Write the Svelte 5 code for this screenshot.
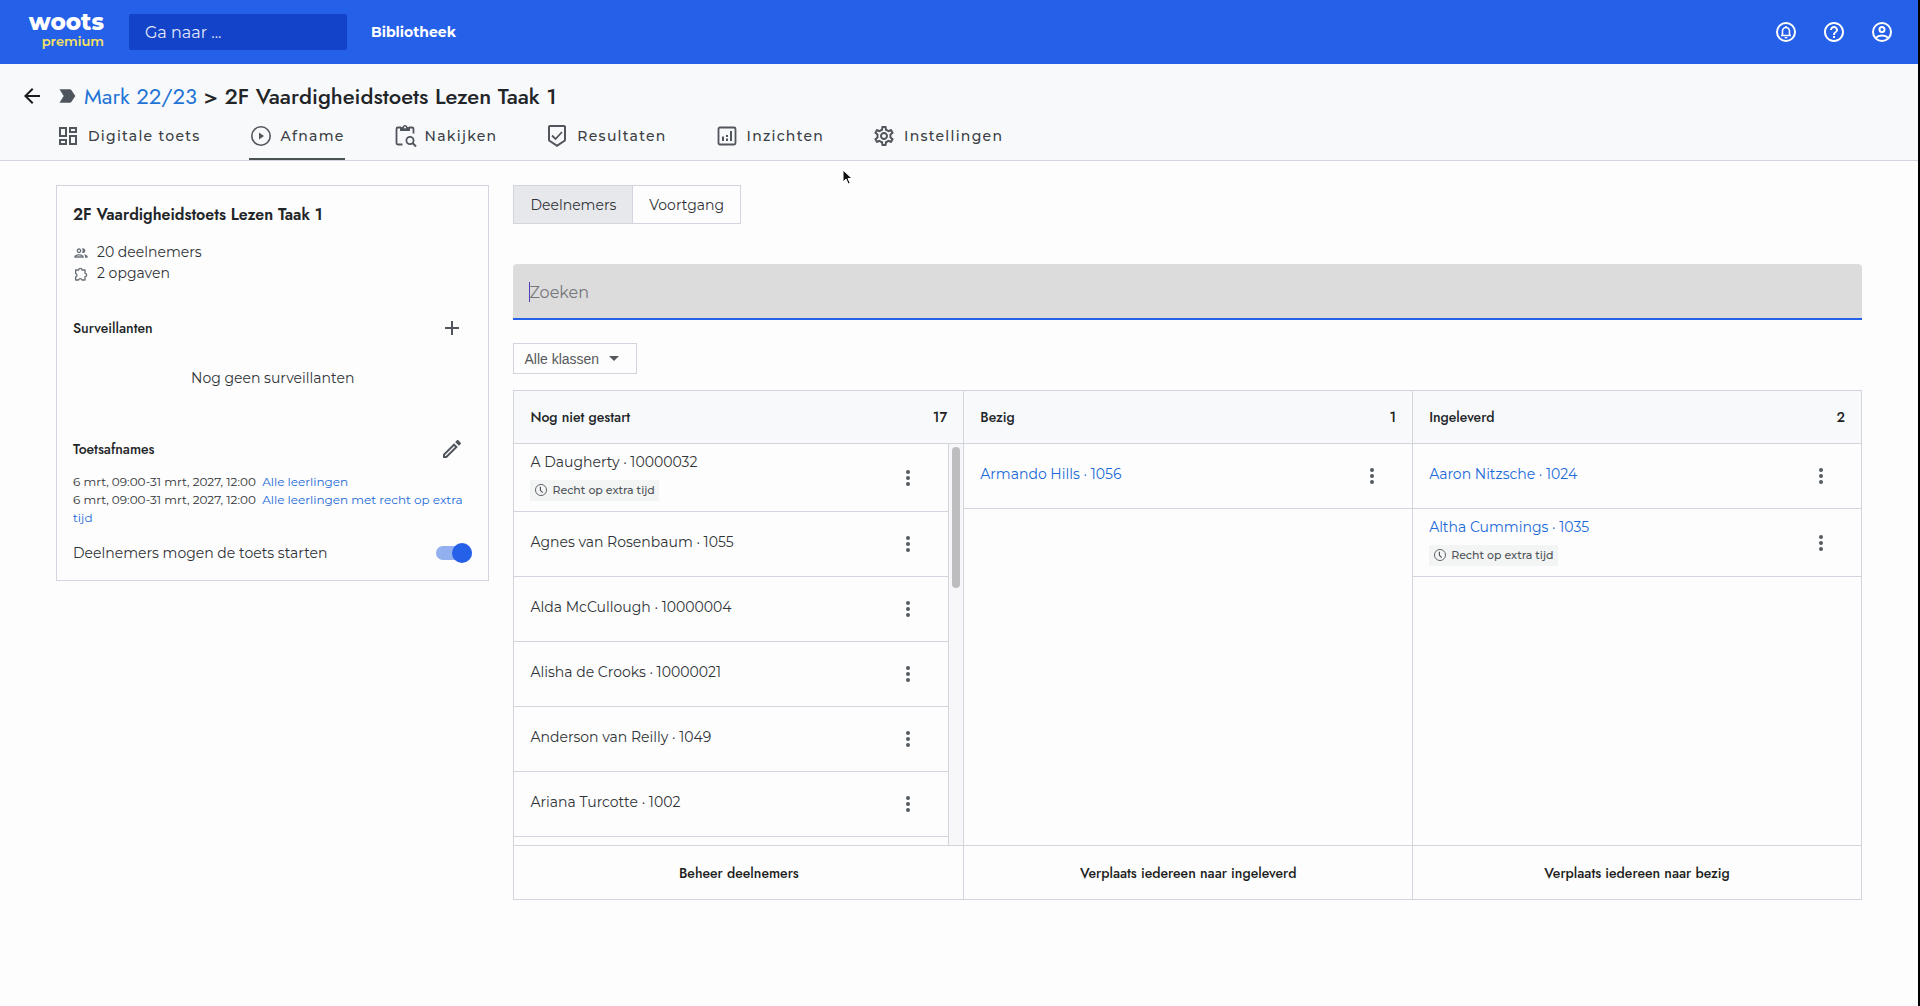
<script lang="ts">
  type Person = { name: string; extra?: boolean };
  type Column = {
    title: string;
    action: string;
    count: number;
    linked: boolean;
    scrolls: boolean;
    people: Person[];
  };

  const tabs = [
    { label: "Digitale toets", icon: "dashboard" },
    { label: "Afname", icon: "play" },
    { label: "Nakijken", icon: "review" },
    { label: "Resultaten", icon: "shield" },
    { label: "Inzichten", icon: "chart" },
    { label: "Instellingen", icon: "gear" },
  ];

  const sessions = ["Alle leerlingen", "Alle leerlingen met recht op extra tijd"];

  const columns: Column[] = [
    {
      title: "Nog niet gestart",
      action: "Beheer deelnemers",
      count: 17,
      linked: false,
      scrolls: true,
      people: [
        { name: "A Daugherty · 10000032", extra: true },
        { name: "Agnes van Rosenbaum · 1055" },
        { name: "Alda McCullough · 10000004" },
        { name: "Alisha de Crooks · 10000021" },
        { name: "Anderson van Reilly · 1049" },
        { name: "Ariana Turcotte · 1002" },
      ],
    },
    {
      title: "Bezig",
      action: "Verplaats iedereen naar ingeleverd",
      count: 1,
      linked: true,
      scrolls: false,
      people: [{ name: "Armando Hills · 1056" }],
    },
    {
      title: "Ingeleverd",
      action: "Verplaats iedereen naar bezig",
      count: 2,
      linked: true,
      scrolls: false,
      people: [
        { name: "Aaron Nitzsche · 1024" },
        { name: "Altha Cummings · 1035", extra: true },
      ],
    },
  ];

  let activeTab = $state("Afname");
  let view = $state("Deelnemers");
  let search = $state("");
  let canStart = $state(true);
</script>

{#snippet icon(name: string, size: number = 24)}
  <svg class="icon" width={size} height={size} viewBox="0 0 24 24" fill="currentColor" aria-hidden="true">
    {#if name === "dashboard"}
      <path d="M19 5v2h-4V5h4M9 5v6H5V5h4m10 8v6h-4v-6h4M9 17v2H5v-2h4M21 3h-8v6h8V3zM11 3H3v10h8V3zm10 8h-8v10h8V11zm-10 4H3v6h8v-6z" />
    {:else if name === "play"}
      <circle cx="12" cy="12" r="9.2" fill="none" stroke="currentColor" stroke-width="1.6" />
      <path d="M10 8.500v7l5-3.500z" />
    {:else if name === "review"}
      <path d="M9.500 20.500H5A1.500 1.500 0 0 1 3.500 19V5A1.500 1.500 0 0 1 5 3.500h3M16 3.500h3A1.500 1.500 0 0 1 20.500 5v4.500" fill="none" stroke="currentColor" stroke-width="1.800" />
      <path d="M7 3h2.500a2.600 2.600 0 0 1 5 0H17v4H7zM12 2.500a1 1 0 1 0 0 2 1 1 0 0 0 0-2z" fill-rule="evenodd" />
      <circle cx="17" cy="16.500" r="3.600" fill="none" stroke="currentColor" stroke-width="1.800" />
      <path d="M19.500 19l3.500 3.500" stroke="currentColor" stroke-width="2" />
    {:else if name === "shield"}
      <path d="M19 1H5c-1.100 0-1.990.9-1.990 2L3 15.930c0 .69.35 1.300.88 1.660L12 23l8.110-5.410c.53-.36.88-.97.88-1.660L21 3c0-1.100-.9-2-2-2zm-7 19.600l-7-4.660V3h14v12.930l-7 4.670z" />
      <path d="M7 11.500l3.500 3.500 6.500-7" fill="none" stroke="currentColor" stroke-width="1.800" />
    {:else if name === "chart"}
      <rect x="3.500" y="3.500" width="17" height="17" rx="1.500" fill="none" stroke="currentColor" stroke-width="1.800" />
      <path d="M7 12.500h2V17H7zM11 14.500h2V17h-2zM11 11h2v2h-2zM15 7h2v10h-2z" />
    {:else if name === "gear"}
      <path d="M19.430 12.980c.04-.32.07-.64.07-.98 0-.34-.03-.66-.07-.98l2.110-1.650c.19-.15.24-.42.12-.64l-2-3.460c-.09-.16-.26-.25-.44-.25-.06 0-.12.01-.17.03l-2.490 1c-.52-.4-1.080-.73-1.690-.98l-.38-2.650C14.460 2.180 14.250 2 14 2h-4c-.25 0-.46.18-.49.42l-.38 2.650c-.61.25-1.170.59-1.690.98l-2.490-1c-.06-.02-.12-.03-.18-.03-.17 0-.34.09-.43.25l-2 3.460c-.13.22-.07.49.12.64l2.110 1.650c-.04.32-.07.65-.07.98 0 .33.03.66.07.98l-2.110 1.650c-.19.15-.24.42-.12.64l2 3.460c.09.16.26.25.44.25.06 0 .12-.01.17-.03l2.490-1c.52.4 1.080.73 1.690.98l.38 2.650c.03.24.24.42.49.42h4c.25 0 .46-.18.49-.42l.38-2.650c.61-.25 1.170-.59 1.690-.98l2.490 1c.06.02.12.03.18.03.17 0 .34-.09.43-.25l2-3.460c.12-.22.07-.49-.12-.64l-2.110-1.650zm-1.980-1.710c.04.31.05.52.05.73 0 .21-.02.43-.05.73l-.14 1.130.89.7 1.080.84-.7 1.210-1.270-.51-1.040-.42-.9.68c-.43.32-.84.56-1.250.73l-1.060.43-.16 1.130-.2 1.350h-1.400l-.19-1.350-.16-1.130-1.060-.43c-.43-.18-.83-.41-1.230-.71l-.91-.7-1.060.43-1.270.51-.7-1.210 1.080-.84.89-.7-.14-1.130c-.03-.31-.05-.54-.05-.74s.02-.43.05-.73l.14-1.130-.89-.7-1.080-.84.7-1.210 1.270.51 1.040.42.9-.68c.43-.32.84-.56 1.250-.73l1.060-.43.16-1.130.2-1.350h1.390l.19 1.350.16 1.130 1.060.43c.43.18.83.41 1.230.71l.91.7 1.060-.43 1.270-.51.7 1.210-1.070.85-.89.7.14 1.130zM12 8c-2.210 0-4 1.790-4 4s1.790 4 4 4 4-1.790 4-4-1.790-4-4-4zm0 6c-1.100 0-2-.9-2-2s.9-2 2-2 2 .9 2 2-.9 2-2 2z" />
    {:else if name === "bell"}
      <circle cx="12" cy="12" r="9" fill="none" stroke="currentColor" stroke-width="2" />
      <path d="M8.500 15.500v-4.500a3.500 3.500 0 0 1 7 0v4.500M7 15.500h10M12 6v2" fill="none" stroke="currentColor" stroke-width="1.600" />
      <path d="M10.500 17h3a1.500 1.500 0 0 1-3 0z" />
    {:else if name === "help"}
      <path d="M11 18h2v-2h-2v2zm1-16C6.480 2 2 6.480 2 12s4.480 10 10 10 10-4.480 10-10S17.520 2 12 2zm0 18c-4.410 0-8-3.590-8-8s3.590-8 8-8 8 3.590 8 8-3.590 8-8 8zm0-14c-2.210 0-4 1.790-4 4h2c0-1.100.9-2 2-2s2 .9 2 2c0 2-3 1.750-3 5h2c0-2.250 3-2.500 3-5 0-2.210-1.790-4-4-4z" />
    {:else if name === "account"}
      <circle cx="12" cy="12" r="9" fill="none" stroke="currentColor" stroke-width="2" />
      <circle cx="12" cy="9.500" r="2.500" fill="none" stroke="currentColor" stroke-width="2" />
      <path d="M5.500 18c3.500-3.300 9.500-3.300 13 0" fill="none" stroke="currentColor" stroke-width="2" />
    {:else if name === "back"}
      <path d="M20 11H7.830l5.590-5.590L12 4l-8 8 8 8 1.410-1.410L7.830 13H20v-2z" />
    {:else if name === "label"}
      <path d="M3 4h12.500c.7 0 1.300.3 1.700.9L22 12l-4.800 7.100c-.4.6-1 .9-1.700.9H3l5-8z" />
    {:else if name === "people"}
      <path d="M9 13.750c-2.340 0-7 1.170-7 3.500V19h14v-1.750c0-2.330-4.660-3.500-7-3.500zM4.340 17c.84-.58 2.870-1.250 4.660-1.250s3.820.67 4.660 1.250H4.340zM9 12c1.930 0 3.500-1.570 3.500-3.500S10.930 5 9 5 5.500 6.570 5.500 8.500 7.070 12 9 12zm0-5c.83 0 1.500.67 1.500 1.500S9.830 10 9 10s-1.500-.67-1.500-1.500S8.170 7 9 7zm7.040 6.810c1.160.84 1.960 1.960 1.960 3.440V19h4v-1.750c0-2.020-3.500-3.170-5.960-3.440zM15 12c1.930 0 3.500-1.570 3.500-3.500S16.930 5 15 5c-.54 0-1.040.13-1.500.35.63.89 1 1.980 1 3.150s-.37 2.260-1 3.150c.46.22.96.35 1.500.35z" />
    {:else if name === "puzzle"}
      <path d="M4 6h4.500a2.500 2.500 0 1 1 5 0H18v5a2.500 2.500 0 1 1 0 5v5h-4.500a2.700 2.700 0 0 0-5.200 0H4v-4.500a2.700 2.700 0 0 0 0-5.200z" fill="none" stroke="currentColor" stroke-width="2" stroke-linejoin="round" />
    {:else if name === "plus"}
      <path d="M19 13h-6v6h-2v-6H5v-2h6V5h2v6h6v2z" />
    {:else if name === "pencil"}
      <path d="M14.060 9.020l.92.92L5.920 19H5v-.92l9.060-9.060M17.660 3c-.25 0-.51.1-.7.29l-1.830 1.830 3.750 3.750 1.830-1.830c.39-.39.39-1.020 0-1.410l-2.340-2.340c-.2-.2-.45-.29-.71-.29zm-3.600 3.190L3 17.250V21h3.750L17.810 9.940l-3.750-3.750z" />
    {:else if name === "clock"}
      <circle cx="12" cy="12" r="9.500" fill="none" stroke="currentColor" stroke-width="1.500" />
      <path d="M11 6.500v6l4 4" fill="none" stroke="currentColor" stroke-width="2" />
    {:else if name === "more"}
      <circle cx="12" cy="6" r="2" />
      <circle cx="12" cy="12" r="2" />
      <circle cx="12" cy="18" r="2" />
    {/if}
  </svg>
{/snippet}

<div class="page">
  <header class="topbar">
    <a class="logo" href="#home">
      <span class="logo-name">woots</span>
      <span class="logo-plan">premium</span>
    </a>
    <input class="goto" type="text" placeholder="Ga naar ..." aria-label="Ga naar" />
    <a class="library" href="#bibliotheek">Bibliotheek</a>
    <div class="topbar-actions">
      <button aria-label="Meldingen">{@render icon("bell")}</button>
      <button aria-label="Help">{@render icon("help")}</button>
      <button aria-label="Account">{@render icon("account")}</button>
    </div>
  </header>

  <div class="subheader">
    <div class="title-row">
      <button class="back" aria-label="Terug">{@render icon("back")}</button>
      <span class="label-icon">{@render icon("label", 20)}</span>
      <h1><a href="#mark">Mark 22/23</a> &gt; 2F Vaardigheidstoets Lezen Taak 1</h1>
    </div>
    <nav class="tabs">
      {#each tabs as tab}
        <button
          class="tab"
          class:active={activeTab === tab.label}
          onclick={() => (activeTab = tab.label)}
        >
          {@render icon(tab.icon)}
          <span>{tab.label}</span>
        </button>
      {/each}
    </nav>
  </div>

  <div class="content">
    <aside class="card">
      <h2>2F Vaardigheidstoets Lezen Taak 1</h2>
      <ul class="facts">
        <li>{@render icon("people", 16)}20 deelnemers</li>
        <li>{@render icon("puzzle", 16)}2 opgaven</li>
      </ul>

      <div class="section-head">
        <h3>Surveillanten</h3>
        <button aria-label="Surveillant toevoegen">{@render icon("plus")}</button>
      </div>
      <p class="empty">Nog geen surveillanten</p>

      <div class="section-head">
        <h3>Toetsafnames</h3>
        <button aria-label="Toetsafnames bewerken">{@render icon("pencil")}</button>
      </div>
      <div class="sessions">
        {#each sessions as group}
          <div>6 mrt, 09:00-31 mrt, 2027, 12:00&nbsp; <a href="#groep">{group}</a></div>
        {/each}
      </div>

      <label class="switch-row">
        <span>Deelnemers mogen de toets starten</span>
        <input class="switch" type="checkbox" bind:checked={canStart} />
      </label>
    </aside>

    <main>
      <div class="views">
        {#each ["Deelnemers", "Voortgang"] as name}
          <button class:selected={view === name} onclick={() => (view = name)}>{name}</button>
        {/each}
      </div>

      <div class="search">
        <input type="text" placeholder="Zoeken" aria-label="Zoeken" bind:value={search} />
        <span class="caret"></span>
      </div>

      <div class="class-filter">
        <select aria-label="Klas">
          <option>Alle klassen</option>
        </select>
        <span class="arrow"></span>
      </div>

      <div class="board">
        {#each columns as column}
          <section class="column">
            <div class="column-head">
              <h3>{column.title}</h3>
              <span>{column.count}</span>
            </div>
            <div class="column-body">
              <ul class="people" class:scrolls={column.scrolls}>
                {#each column.people as person}
                  <li class:tall={person.extra}>
                    <div class="person">
                      {#if column.linked}
                        <a href="#deelnemer">{person.name}</a>
                      {:else}
                        <span>{person.name}</span>
                      {/if}
                      {#if person.extra}
                        <span class="badge">{@render icon("clock", 14)}Recht op extra tijd</span>
                      {/if}
                    </div>
                    <button aria-label="Meer opties">{@render icon("more")}</button>
                  </li>
                {/each}
              </ul>
              {#if column.scrolls}
                <div class="track"><div class="thumb"></div></div>
              {/if}
            </div>
            <button class="column-action">{column.action}</button>
          </section>
        {/each}
      </div>
    </main>
  </div>

  <svg class="pointer" width="12" height="18" viewBox="0 0 12 18" aria-hidden="true">
    <path d="M1 1v12l3-3 2.200 5 2-.9L6 9.500h4z" fill="#111" stroke="#fff" stroke-width="1" />
  </svg>
</div>

<style>
  :global(body) {
    margin: 0;
    background: #fdfdfd;
  }

  .page {
    --heading: Jost, Lato, "Liberation Sans", sans-serif;
    --line: #d4d4de;
    --link: #2069d8;
    --ink: #303337;
    position: relative;
    box-sizing: border-box;
    min-height: 100vh;
    border-right: 2px solid #000;
    font-family: Montserrat, Inter, "Liberation Sans", sans-serif;
    font-size: 14px;
    line-height: 22px;
    color: var(--ink);
  }

  .page * {
    box-sizing: border-box;
  }

  button,
  input,
  select {
    font: inherit;
    color: inherit;
  }

  button {
    padding: 0;
    border: 0;
    background: none;
    cursor: pointer;
  }

  a {
    color: var(--link);
    text-decoration: none;
  }

  h1,
  h2,
  h3,
  p,
  ul {
    margin: 0;
    padding: 0;
    font-weight: 400;
    list-style: none;
  }

  .icon {
    display: block;
    flex: none;
  }

  .topbar {
    display: flex;
    align-items: center;
    height: 64px;
    padding: 0 24px 0 28px;
    background: #2560e8;
    color: #fff;
  }

  .logo {
    display: flex;
    flex-direction: column;
    align-items: flex-end;
    width: 76px;
    height: 48px;
    padding-top: 2px;
    margin-right: 25px;
    color: #fff;
  }

  .logo-name {
    font: 800 23px/24px Montserrat, Lato, sans-serif;
  }

  .logo-plan {
    font: 600 13px/14px Montserrat, Lato, sans-serif;
    color: #f7e463;
  }

  .goto {
    width: 218px;
    height: 36px;
    padding: 0 16px;
    border: 0;
    border-radius: 2px;
    background: #1343c8;
    font-size: 16px;
    outline: 0;
  }

  .goto::placeholder {
    color: #e3e9fa;
    opacity: 1;
  }

  .library {
    margin-left: 24px;
    color: #fff;
    font-weight: 700;
  }

  .topbar-actions {
    display: flex;
    gap: 24px;
    margin-left: auto;
  }

  .subheader {
    border-bottom: 1px solid var(--line);
    background: #f8f9fb;
  }

  .title-row {
    display: flex;
    align-items: center;
    height: 48px;
    padding: 16px 20px 0;
  }

  .back {
    color: #1c1c1c;
  }

  .label-icon {
    margin: 0 7px 0 13px;
    color: #4f555c;
  }

  h1 {
    font: 500 22px/32px var(--heading);
    color: #222528;
  }

  h1 a {
    font-weight: 400;
    color: #1f74d6;
  }

  .tabs {
    display: flex;
    gap: 48px;
    padding: 0 56px;
  }

  .tab {
    display: flex;
    align-items: center;
    gap: 8px;
    height: 48px;
    padding-top: 2px;
    border-bottom: 2px solid transparent;
    letter-spacing: 0.09em;
    font-weight: 500;
    color: #3a3f45;
  }

  .tab .icon {
    color: #50565c;
  }

  .tab.active {
    border-color: #4a5350;
  }

  .content {
    display: grid;
    grid-template-columns: 24% 1fr;
    align-items: start;
    gap: 24px;
    padding: 24px 56px;
  }

  .card {
    padding: 16px;
    border: 1px solid var(--line);
  }

  .card h2 {
    font: 600 16px/26px var(--heading);
    color: #222528;
  }

  .facts {
    margin-top: 14px;
    line-height: 21px;
  }

  .facts li {
    display: flex;
    align-items: center;
    gap: 8px;
  }

  .facts .icon {
    color: #6a7078;
  }

  .section-head {
    display: flex;
    align-items: center;
    justify-content: space-between;
    margin-top: 32px;
    padding-right: 8px;
    color: #50555b;
  }

  h3 {
    font: 500 14px/24px var(--heading);
    color: #222528;
  }

  .empty {
    padding: 27px 0 16px;
    text-align: center;
  }

  .sessions {
    margin-top: 12px;
    font-size: 12px;
    line-height: 18px;
  }

  .switch-row {
    display: flex;
    align-items: center;
    justify-content: space-between;
    margin-top: 15px;
  }

  .switch {
    appearance: none;
    position: relative;
    width: 36px;
    height: 14px;
    margin: 0;
    border-radius: 7px;
    background: #92aff0;
  }

  .switch::after {
    content: "";
    position: absolute;
    top: -3px;
    left: 0;
    width: 20px;
    height: 20px;
    border-radius: 50%;
    background: #fff;
  }

  .switch:checked::after {
    left: 16px;
    background: #2560e8;
  }

  .views {
    display: flex;
  }

  .views button {
    height: 39px;
    padding: 0 16px;
    border: 1px solid var(--line);
  }

  .views button + button {
    border-left: 0;
  }

  .views .selected {
    background: #e6e8ec;
  }

  .search {
    position: relative;
    margin-top: 40px;
  }

  .search input {
    display: block;
    width: 100%;
    height: 56px;
    padding: 2px 16px 0;
    border: 0;
    border-bottom: 2px solid #2560e8;
    border-radius: 4px 4px 0 0;
    background: #dcdcdc;
    font-size: 16px;
    outline: 0;
  }

  .search input::placeholder {
    color: #75777a;
    opacity: 1;
  }

  .caret {
    position: absolute;
    top: 18px;
    left: 16px;
    width: 1px;
    height: 20px;
    background: #4a3fb8;
  }

  .class-filter {
    position: relative;
    width: fit-content;
    margin: 23px 0 16px;
  }

  .class-filter select {
    display: block;
    appearance: none;
    height: 31px;
    padding: 0 37px 0 10px;
    border: 1px solid var(--line);
    border-radius: 0;
    background: transparent;
    font-family: "Liberation Sans", sans-serif;
    color: #55585c;
  }

  .arrow {
    position: absolute;
    top: 13px;
    right: 18px;
    border: 5px solid transparent;
    border-top-color: #55585c;
    border-bottom: 0;
    pointer-events: none;
  }

  .board {
    display: grid;
    grid-template-columns: repeat(3, 1fr);
    border: 1px solid var(--line);
  }

  .column {
    display: flex;
    flex-direction: column;
  }

  .column + .column {
    border-left: 1px solid var(--line);
  }

  .column-head {
    display: flex;
    align-items: center;
    justify-content: space-between;
    height: 53px;
    padding: 0 16px;
    border-bottom: 1px solid var(--line);
    background: #f8f9fb;
    font: 500 14px/24px var(--heading);
    color: #1c1e20;
  }

  .column-body {
    display: flex;
    flex: 1;
  }

  .people {
    flex: 1;
  }

  .people.scrolls {
    padding-bottom: 8px;
    border-right: 1px solid var(--line);
  }

  .people li {
    display: flex;
    align-items: center;
    justify-content: space-between;
    height: 65px;
    padding: 0 28px 0 16px;
    border-bottom: 1px solid var(--line);
  }

  .people li.tall {
    height: 68px;
  }

  .people button {
    color: #565b60;
  }

  .person {
    display: flex;
    flex-direction: column;
    align-items: flex-start;
    gap: 7px;
    padding-bottom: 4px;
  }

  .badge {
    display: flex;
    align-items: center;
    gap: 4px;
    height: 21px;
    padding: 0 4px;
    background: #f3f5f5;
    font-size: 11px;
    font-weight: 500;
    color: #4f5459;
  }

  .track {
    width: 14px;
    padding: 3px 3px 0;
    background: #f7f7f9;
  }

  .thumb {
    height: 141px;
    border-radius: 4px;
    background: #bdbdc0;
  }

  .column-action {
    height: 54px;
    border-top: 1px solid var(--line);
    font: 500 14px/24px var(--heading);
    color: #1c1e20;
  }

  .pointer {
    position: absolute;
    top: 169px;
    left: 842px;
  }
</style>
